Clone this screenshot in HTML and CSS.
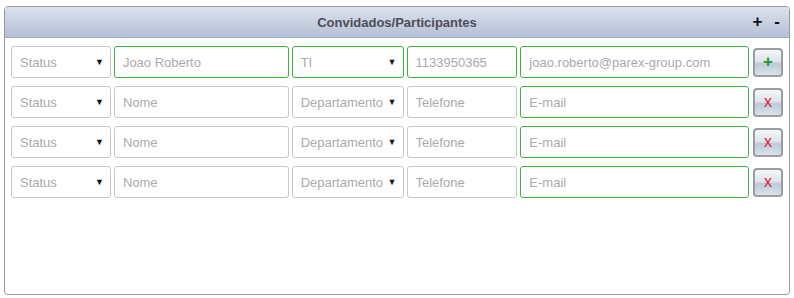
FILE: index.html
```html
<!DOCTYPE html>
<html lang="pt">

<head>
    <meta charset="UTF-8">
    <title>Convidados/Participantes</title>
    <link rel="stylesheet" href="styles.css">
</head>

<body>
    <div class="panel">
        <div class="panel-header">
            <span class="panel-title">Convidados/Participantes</span>
            <div class="panel-tools">
                <span>+</span>
                <span>-</span>
            </div>
        </div>
        <div class="panel-body">
            <div class="row">
                <div class="field select status">Status<span class="arrow">&#9660;</span></div>
                <div class="field name ok">Joao Roberto</div>
                <div class="field select dept ok">TI<span class="arrow">&#9660;</span></div>
                <div class="field phone ok">1133950365</div>
                <div class="field email ok">joao.roberto@parex-group.com</div>
                <button class="btn add">+</button>
            </div>
            <div class="row">
                <div class="field select status">Status<span class="arrow">&#9660;</span></div>
                <div class="field name">Nome</div>
                <div class="field select dept">Departamento<span class="arrow">&#9660;</span></div>
                <div class="field phone">Telefone</div>
                <div class="field email ok">E-mail</div>
                <button class="btn remove">x</button>
            </div>
            <div class="row">
                <div class="field select status">Status<span class="arrow">&#9660;</span></div>
                <div class="field name">Nome</div>
                <div class="field select dept">Departamento<span class="arrow">&#9660;</span></div>
                <div class="field phone">Telefone</div>
                <div class="field email ok">E-mail</div>
                <button class="btn remove">x</button>
            </div>
            <div class="row">
                <div class="field select status">Status<span class="arrow">&#9660;</span></div>
                <div class="field name">Nome</div>
                <div class="field select dept">Departamento<span class="arrow">&#9660;</span></div>
                <div class="field phone">Telefone</div>
                <div class="field email ok">E-mail</div>
                <button class="btn remove">x</button>
            </div>
        </div>
    </div>
</body>

</html>
```

FILE: styles.css
```css
body {
    margin: 0;
    padding: 6px 4px 0 4px;
    font-family: 'Liberation Sans', Arial, sans-serif;
    background-color: #fff;
}

.panel {
    width: 786px;
    height: 289px;
    border: 1px solid #999;
    border-radius: 4px;
    box-sizing: border-box;
    overflow: hidden;
}

.panel-header {
    height: 30px;
    background: linear-gradient(to bottom, #dce2ec, #b5bfd6);
    border-bottom: 1px solid #a3aec4;
    display: flex;
    align-items: center;
    justify-content: center;
    position: relative;
}

.panel-title {
    font-size: 13px;
    font-weight: bold;
    color: #4d4d5a;
}

.panel-tools {
    position: absolute;
    right: 9px;
    top: 5px;
    display: flex;
    gap: 12px;
    font-size: 17px;
    font-weight: bold;
    color: #111;
}

.panel-body {
    padding: 8px 6px 0 6px;
    display: flex;
    flex-direction: column;
    gap: 8px;
}

.row {
    display: flex;
    align-items: center;
    gap: 3px;
}

.field {
    height: 32px;
    box-sizing: border-box;
    border: 1px solid #c8c8c8;
    border-radius: 3px;
    padding: 0 8px;
    font-size: 13px;
    color: #aaa;
    display: flex;
    align-items: center;
    white-space: nowrap;
    overflow: hidden;
}

.field.ok {
    border-color: #3cb43c;
}

.select {
    justify-content: space-between;
    padding-right: 6px;
}

.arrow {
    font-size: 9px;
    color: #111;
}

.status {
    width: 100px;
}

.name {
    width: 175px;
}

.dept {
    width: 112px;
}

.phone {
    width: 111px;
}

.email {
    width: 229px;
}

.btn {
    width: 30px;
    height: 29px;
    margin-left: 1px;
    border: 2px solid #9c9ca4;
    border-radius: 4px;
    background: linear-gradient(to bottom, #f4f6f8 0%, #dfe5ea 45%, #bccbd6 55%, #d9e4ec 100%);
    font-family: 'Liberation Sans', Arial, sans-serif;
    font-size: 17px;
    font-weight: bold;
    padding: 0;
    cursor: pointer;
}

.btn.add {
    color: #1e9a1e;
}

.btn.remove {
    color: #e0203a;
    font-weight: normal;
    font-size: 16px;
}
```
